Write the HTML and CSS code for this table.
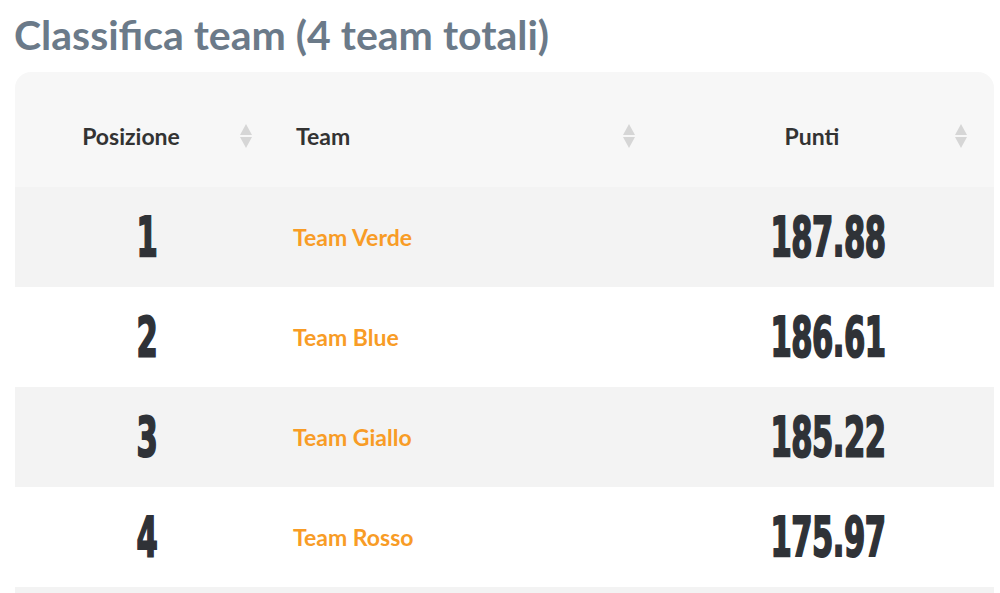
FILE: index.html
```html
<!DOCTYPE html>
<html lang="it">
<head>
<meta charset="utf-8">
<title>Classifica team</title>
<link rel="stylesheet" href="styles.css">
</head>
<body>
<div class="page">
  <h2 class="title">Classifica team (4 team totali)</h2>
  <div class="card">
    <table class="ranking">
      <colgroup>
        <col class="c-pos">
        <col class="c-team">
        <col class="c-pts">
      </colgroup>
      <thead>
        <tr>
          <th class="th-center"><span class="th-label">Posizione</span><span class="sort"><svg viewBox="0 0 12 24" width="12" height="24"><path d="M6 0 L12 11 L0 11 Z"/><path d="M0 13 L12 13 L6 24 Z"/></svg></span></th>
          <th class="th-left"><span class="th-label">Team</span><span class="sort"><svg viewBox="0 0 12 24" width="12" height="24"><path d="M6 0 L12 11 L0 11 Z"/><path d="M0 13 L12 13 L6 24 Z"/></svg></span></th>
          <th class="th-center"><span class="th-label">Punti</span><span class="sort"><svg viewBox="0 0 12 24" width="12" height="24"><path d="M6 0 L12 11 L0 11 Z"/><path d="M0 13 L12 13 L6 24 Z"/></svg></span></th>
        </tr>
      </thead>
      <tbody>
        <tr class="odd"><td class="num"><span class="big">1</span></td><td class="team"><a>Team Verde</a></td><td class="num"><span class="big">187.88</span></td></tr>
        <tr class="even"><td class="num"><span class="big">2</span></td><td class="team"><a>Team Blue</a></td><td class="num"><span class="big">186.61</span></td></tr>
        <tr class="odd"><td class="num"><span class="big">3</span></td><td class="team"><a>Team Giallo</a></td><td class="num"><span class="big">185.22</span></td></tr>
        <tr class="even"><td class="num"><span class="big">4</span></td><td class="team"><a>Team Rosso</a></td><td class="num"><span class="big">175.97</span></td></tr>
        <tr class="odd"><td class="num"></td><td class="team"></td><td class="num"></td></tr>
      </tbody>
    </table>
  </div>
</div>
</body>
</html>
```
FILE: styles.css
```css
html, body {
  margin: 0;
  padding: 0;
  background: #ffffff;
}
body {
  font-family: Lato, "Open Sans", sans-serif;
  overflow: hidden;
}
.page {
  padding: 10px 6px 0 15px;
}
.title {
  margin: 0 0 13px -1px;
  font-size: 41px;
  line-height: 49px;
  font-weight: 700;
  color: #6b7a89;
}
.card {
  background: #f7f7f7;
  border-radius: 16px 16px 0 0;
  overflow: hidden;
  width: 979px;
}
.ranking {
  width: 979px;
  border-collapse: collapse;
  table-layout: fixed;
}
.c-pos { width: 264px; }
.c-team { width: 383px; }
.c-pts { width: 332px; }
.ranking th {
  height: 115px;
  padding: 0 32px 0 0;
  position: relative;
  font-size: 23px;
  font-weight: 700;
  color: #333333;
  vertical-align: middle;
}
.th-label { position: relative; top: 6px; }
.th-center { text-align: center; }
.th-left { text-align: left; padding-left: 17px !important; }
.sort {
  position: absolute;
  right: 27px;
  top: 50%;
  margin-top: -6px;
  width: 12px;
  height: 24px;
  display: block;
}
.sort svg { display: block; fill: #d6d6d6; }
.ranking td {
  height: 100px;
  padding: 0;
  vertical-align: middle;
}
.odd td { background: #f3f3f3; }
.even td { background: #ffffff; }
.num { text-align: center; }
.big {
  display: inline-block;
  font-family: "DejaVu Sans Condensed", "DejaVu Sans", sans-serif;
  font-stretch: condensed;
  font-weight: 700;
  font-size: 34px;
  line-height: 34px;
  color: #2f3237;
  -webkit-text-stroke: 1.2px #2f3237;
  transform: scaleY(1.6);
  letter-spacing: -0.5px;
}
.team { padding-left: 14px !important; }
.team a {
  font-size: 23px;
  font-weight: 700;
  color: #f89c26;
}
```
